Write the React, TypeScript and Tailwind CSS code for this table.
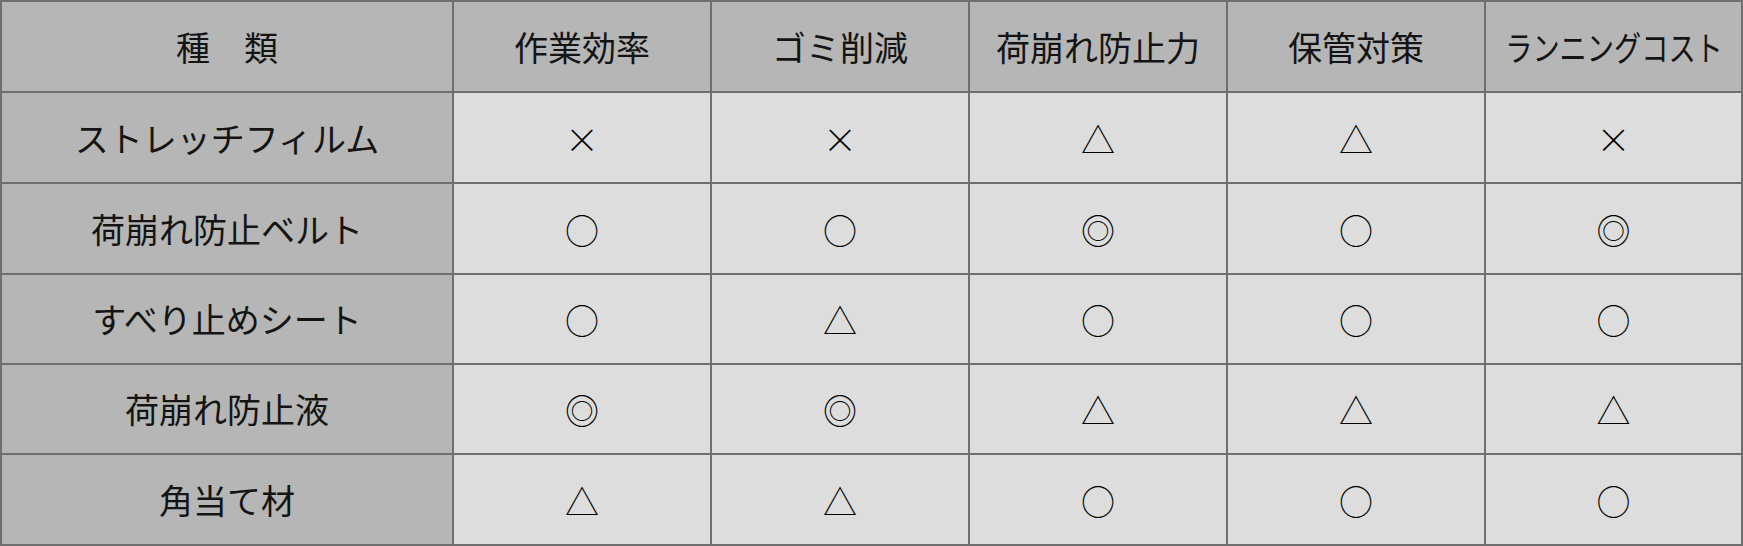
import { Fragment } from 'react';

const headers = ['作業効率', 'ゴミ削減', '荷崩れ防止力', '保管対策', 'ランニングコスト'];

const rows: { name: string; marks: string[] }[] = [
  { name: 'ストレッチフィルム', marks: ['×', '×', '△', '△', '×'] },
  { name: '荷崩れ防止ベルト', marks: ['○', '○', '◎', '○', '◎'] },
  { name: 'すべり止めシート', marks: ['○', '△', '○', '○', '○'] },
  { name: '荷崩れ防止液', marks: ['◎', '◎', '△', '△', '△'] },
  { name: '角当て材', marks: ['△', '△', '○', '○', '○'] },
];

const font = { fontFamily: '"Noto Sans CJK JP", "Noto Sans", sans-serif' };

export default function App() {
  return (
    <div
      className="w-[1743px] h-[546px] bg-[#6f6f6f] p-[2px] grid grid-cols-[450px_256px_256px_256px_256px_255px] grid-rows-[89px_89px_89px_88px_88px_89px] gap-[2px] text-[34px] text-[#141414] leading-none"
      style={font}
    >
      <div className="bg-[#b5b6b5] flex items-center justify-center">種　類</div>
      {headers.map((h, i) => (
        <div key={h} className="bg-[#b5b6b5] flex items-center justify-center overflow-hidden">
          {i === 4 ? (
            <span className="inline-block whitespace-nowrap scale-x-[0.8]">{h}</span>
          ) : (
            h
          )}
        </div>
      ))}
      {rows.map((r) => (
        <Fragment key={r.name}>
          <div className="bg-[#b5b6b5] flex items-center justify-center">{r.name}</div>
          {r.marks.map((m, j) => (
            <div key={j} className="bg-[#dcdddc] flex items-center justify-center pt-[2px] font-light text-black">
              {m}
            </div>
          ))}
        </Fragment>
      ))}
    </div>
  );
}
